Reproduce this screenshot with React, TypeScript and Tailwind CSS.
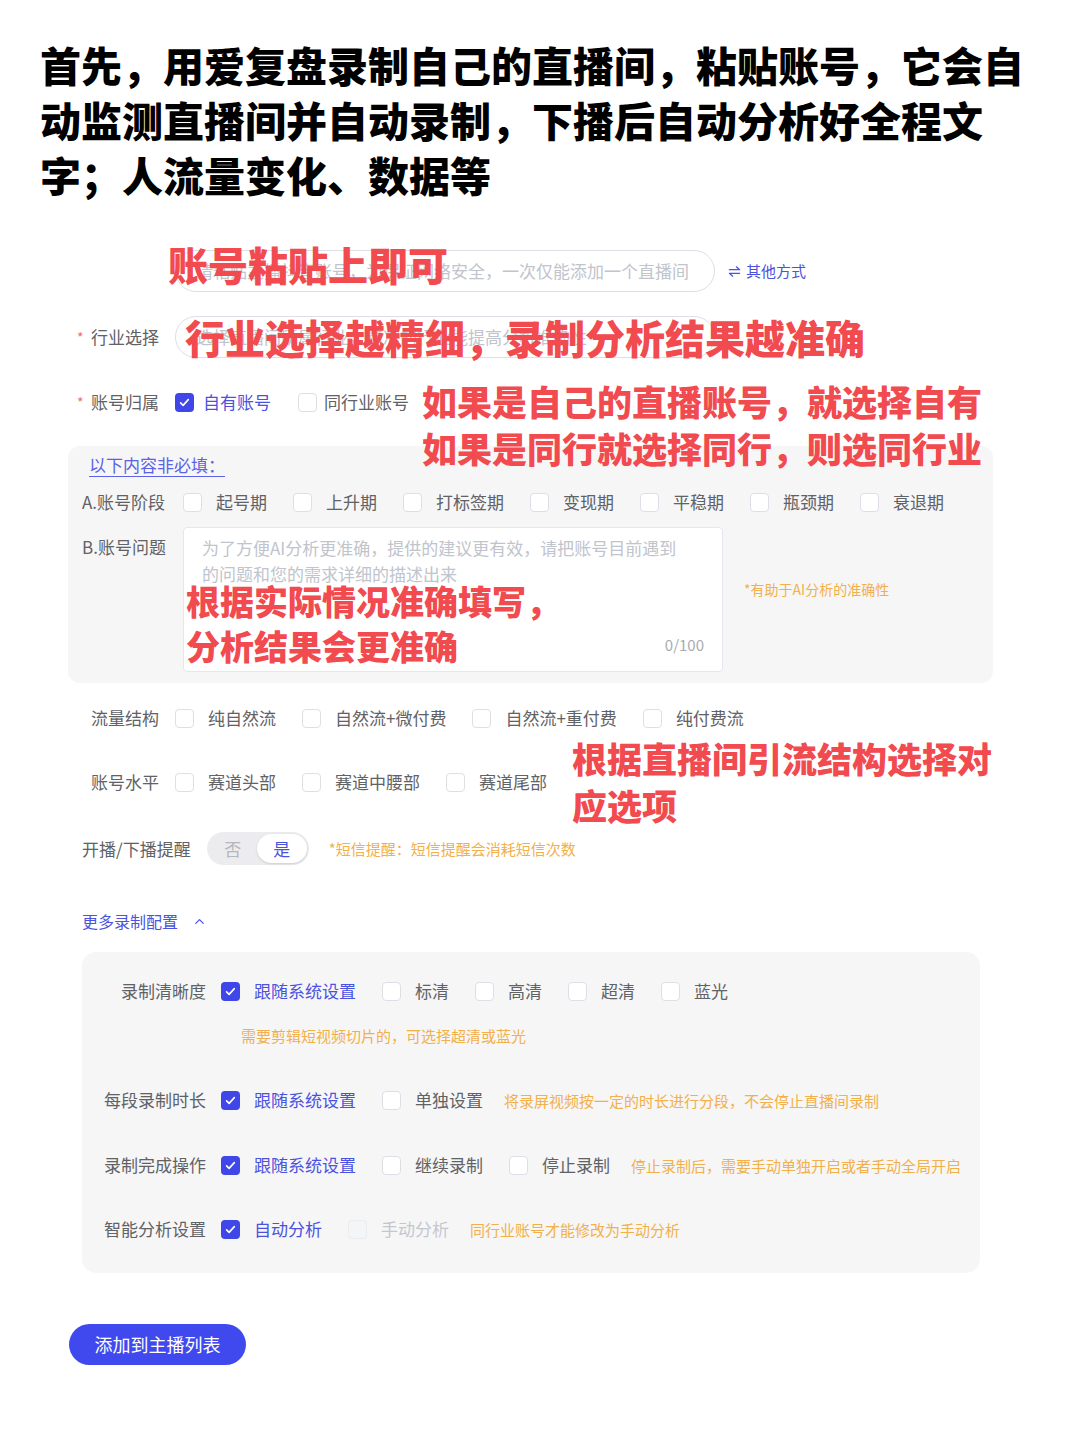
import { ChevronUp } from "lucide-react";

// checkbox square: on = checked (blue), off = disabled
function Box({ on = false, off = false }: { on?: boolean; off?: boolean }) {
  if (on) {
    return (
      <span className="flex h-[19px] w-[19px] shrink-0 items-center justify-center rounded-[4px] bg-[#3f47e8]">
        <svg viewBox="0 0 16 16" className="h-[13px] w-[13px]" fill="none" stroke="white" strokeWidth="2" strokeLinecap="round" strokeLinejoin="round">
          <path d="M3.2 8.4l3.1 3.1 6.4-7" />
        </svg>
      </span>
    );
  }
  return (
    <span
      className={
        off
          ? "h-[19px] w-[19px] shrink-0 rounded-[4px] border border-[#ebecf0] bg-[#f4f5f7]"
          : "h-[19px] w-[19px] shrink-0 rounded-[4px] border border-[#dcdfe6] bg-white"
      }
    />
  );
}

function Opt({ label, on = false, off = false }: { label: string; on?: boolean; off?: boolean }) {
  return (
    <span className="mr-[26px] flex shrink-0 items-center whitespace-nowrap">
      <Box on={on} off={off} />
      <span
        className={
          on
            ? "ml-[14px] text-[17px] text-[#4a52e0]"
            : off
              ? "ml-[14px] text-[17px] text-[#c4c7cd]"
              : "ml-[14px] text-[17px] text-[#606266]"
        }
      >
        {label}
      </span>
    </span>
  );
}

function Hint({ children }: { children: React.ReactNode }) {
  return <span className="whitespace-nowrap text-[15px] text-[#f2b04a]">{children}</span>;
}

function ConfigRow({ label, children }: { label: string; children: React.ReactNode }) {
  return (
    <div className="flex h-[24px] items-center whitespace-nowrap">
      <span className="w-[104px] shrink-0 text-right text-[17px] text-[#606266]">{label}</span>
      <div className="ml-[15px] flex shrink-0 items-center">{children}</div>
    </div>
  );
}

export default function App() {
  return (
    <div className="min-h-[1443px] w-[1080px] bg-white font-['Noto_Sans_CJK_SC','Noto_Sans',sans-serif] text-[#606266]">
      <h1 className="px-[40px] pt-[37px] text-[41px] font-black leading-[55px] text-black">
        首先，用爱复盘录制自己的直播间，粘贴账号，它会自
        <br />
        动监测直播间并自动录制，下播后自动分析好全程文
        <br />
        字；人流量变化、数据等
      </h1>

      {/* account input */}
      <div className="relative mt-[48px] flex h-[42px] items-center">
        <div className="ml-[175px] flex h-[42px] w-[540px] items-center overflow-hidden whitespace-nowrap rounded-full border border-[#dcdfe6] px-[20px] text-[17px] text-[#c0c4cc]">
          请粘贴主播抖音账号，为保证网络安全，一次仅能添加一个直播间
        </div>
        <span className="ml-[13px] flex items-center gap-[5px] text-[15px] text-[#4a52e0]">
          <svg viewBox="0 0 14 14" className="h-[13px] w-[13px]" fill="none" stroke="currentColor" strokeWidth="1.4" strokeLinecap="round" strokeLinejoin="round">
            <path d="M1.5 5h11L9 2" />
            <path d="M12.5 9h-11L5 12" />
          </svg>
          其他方式
        </span>
        <span className="absolute left-[168px] top-[-6px] text-[40px] font-black leading-[40px] text-[#f14a4f]">
          账号粘贴上即可
        </span>
      </div>

      {/* industry */}
      <div className="relative mt-[24px] flex h-[42px] items-center">
        <span className="ml-[77px] w-[14px] text-[14px] text-[#f56c6c]">*</span>
        <span className="text-[17px]">行业选择</span>
        <div className="ml-[16px] flex h-[42px] w-[540px] items-center overflow-hidden whitespace-nowrap rounded-full border border-[#dcdfe6] px-[20px] text-[17px] text-[#c0c4cc]">
          选择直播间所属行业，精准的行业能提高分析准确性
        </div>
        <span className="absolute left-[185px] top-[1px] text-[40px] font-black leading-[40px] text-[#f14a4f]">
          行业选择越精细，录制分析结果越准确
        </span>
      </div>

      {/* ownership */}
      <div className="relative mt-[32px] flex h-[24px] items-center">
        <span className="ml-[77px] w-[14px] text-[14px] text-[#f56c6c]">*</span>
        <span className="text-[17px]">账号归属</span>
        <span className="ml-[16px] flex items-center">
          <Box on />
          <span className="ml-[9px] text-[17px] text-[#4a52e0]">自有账号</span>
        </span>
        <span className="ml-[27px] flex items-center">
          <Box />
          <span className="ml-[7px] text-[17px]">同行业账号</span>
        </span>
        <div className="absolute left-[422px] top-[-13px] text-[35px] font-black leading-[47px] text-[#f14a4f]">
          如果是自己的直播账号，就选择自有
          <br />
          如果是同行就选择同行，则选同行业
        </div>
      </div>

      {/* optional section */}
      <div className="ml-[68px] mt-[32px] h-[237px] w-[925px] rounded-[12px] bg-[#f6f6f7] pt-[7px]">
        <div className="ml-[21px] text-[17px] leading-[24px] text-[#5b62e6] underline underline-offset-[4px]">以下内容非必填：</div>
        <div className="mt-[13px] flex h-[24px] items-center">
          <span className="ml-[14px] w-[101px] text-[17px]">A.账号阶段</span>
          <Opt label="起号期" />
          <Opt label="上升期" />
          <Opt label="打标签期" />
          <Opt label="变现期" />
          <Opt label="平稳期" />
          <Opt label="瓶颈期" />
          <Opt label="衰退期" />
        </div>
        <div className="mt-[13px] flex items-start">
          <span className="ml-[14px] mt-[8px] w-[101px] text-[17px] leading-[24px]">B.账号问题</span>
          <div className="relative flex h-[145px] w-[540px] flex-col rounded-[4px] border border-[#e4e7ed] bg-white px-[18px] pt-[7px]">
            <p className="text-[17px] leading-[26px] text-[#c0c4cc]">
              为了方便AI分析更准确，提供的建议更有效，请把账号目前遇到
              <br />
              的问题和您的需求详细的描述出来
            </p>
            <span className="mt-auto mb-[15px] self-end text-[15px] text-[#a8abb2]">0/100</span>
            <div className="absolute left-[2px] top-[50px] text-[34px] font-black leading-[45px] text-[#f14a4f]">
              根据实际情况准确填写，
              <br />
              分析结果会更准确
            </div>
          </div>
          <span className="ml-[21px] mt-[52px] text-[14px] text-[#f2b04a]">*有助于AI分析的准确性</span>
        </div>
      </div>

      {/* traffic */}
      <div className="mt-[23px] flex h-[24px] items-center">
        <span className="ml-[91px] w-[84px] text-[17px]">流量结构</span>
        <Opt label="纯自然流" />
        <Opt label="自然流+微付费" />
        <Opt label="自然流+重付费" />
        <Opt label="纯付费流" />
      </div>

      <div className="relative mt-[40px] flex h-[24px] items-center">
        <span className="ml-[91px] w-[84px] text-[17px]">账号水平</span>
        <Opt label="赛道头部" />
        <Opt label="赛道中腰部" />
        <Opt label="赛道尾部" />
        <div className="absolute left-[572px] top-[-36px] text-[35px] font-black leading-[47px] text-[#f14a4f]">
          根据直播间引流结构选择对
          <br />
          应选项
        </div>
      </div>

      {/* reminder toggle */}
      <div className="mt-[38px] flex h-[33px] items-center">
        <span className="ml-[82px] text-[17px]">开播/下播提醒</span>
        <div className="ml-[16px] flex h-[33px] w-[102px] items-center rounded-full bg-[#ececee] p-[2px]">
          <span className="flex-1 text-center text-[17px] text-[#b4b7bd]">否</span>
          <span className="flex h-[29px] w-[50px] items-center justify-center rounded-full bg-white text-[17px] text-[#4a52e0] shadow-sm">是</span>
        </div>
        <span className="ml-[20px]">
          <Hint>*短信提醒：短信提醒会消耗短信次数</Hint>
        </span>
      </div>

      <div className="mt-[44px] flex h-[24px] items-center text-[16px] text-[#4a52e0]">
        <span className="ml-[82px]">更多录制配置</span>
        <ChevronUp className="ml-[14px] h-[15px] w-[15px]" strokeWidth={2} />
      </div>

      {/* recording config */}
      <div className="ml-[82px] mt-[19px] w-[898px] rounded-[14px] bg-[#f6f6f7] px-[20px] pb-[32px] pt-[27px]">
        <ConfigRow label="录制清晰度">
          <Opt label="跟随系统设置" on />
          <Opt label="标清" />
          <Opt label="高清" />
          <Opt label="超清" />
          <Opt label="蓝光" />
        </ConfigRow>
        <div className="ml-[139px] mt-[20px] leading-[24px]">
          <Hint>需要剪辑短视频切片的，可选择超清或蓝光</Hint>
        </div>
        <div className="mt-[40px]">
          <ConfigRow label="每段录制时长">
            <Opt label="跟随系统设置" on />
            <Opt label="单独设置" />
            <span className="-ml-[5px]">
              <Hint>将录屏视频按一定的时长进行分段，不会停止直播间录制</Hint>
            </span>
          </ConfigRow>
        </div>
        <div className="mt-[41px]">
          <ConfigRow label="录制完成操作">
            <Opt label="跟随系统设置" on />
            <Opt label="继续录制" />
            <Opt label="停止录制" />
            <span className="-ml-[5px]">
              <Hint>停止录制后，需要手动单独开启或者手动全局开启</Hint>
            </span>
          </ConfigRow>
        </div>
        <div className="mt-[40px]">
          <ConfigRow label="智能分析设置">
            <Opt label="自动分析" on />
            <Opt label="手动分析" off />
            <span className="-ml-[5px]">
              <Hint>同行业账号才能修改为手动分析</Hint>
            </span>
          </ConfigRow>
        </div>
      </div>

      <button className="ml-[69px] mt-[51px] flex h-[41px] w-[177px] items-center justify-center rounded-full bg-[#4049ee] text-[18px] text-white">
        添加到主播列表
      </button>
    </div>
  );
}
